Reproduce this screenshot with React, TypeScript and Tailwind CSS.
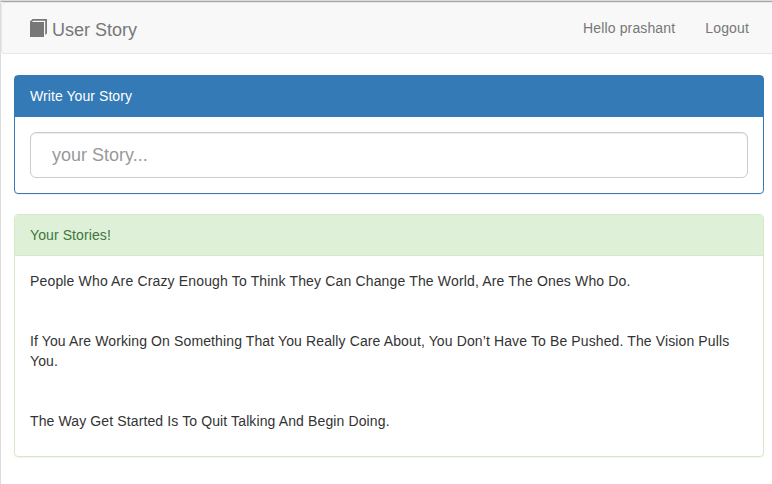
export default function App() {
  return (
    <div className="h-[484px] w-[772px] overflow-hidden border-l border-[#dcdcdc] bg-white font-['Liberation_Sans',Arial,sans-serif] text-[14px] leading-[20px] text-[#333]">
      <div className="h-[2px] border-t border-[#dcdcdc] bg-[#a6a6a6]" />
      <nav className="flex h-[52px] items-center justify-between rounded-l-[4px] border border-r-0 border-[#e7e7e7] bg-[#f8f8f8] pr-[23px] pl-[28px] text-[#777]">
        <a className="flex items-center gap-[4px] text-[18px]">
          <svg width="18" height="18" viewBox="0 0 18 18" fill="#777">
            <path d="M0 2.500L2.500 0H17V14.500L15.200 16V1.800H3.200L1.800 3H14V18H0z" />
          </svg>
          <span className="pt-[3px]">User Story</span>
        </a>
        <div className="flex gap-[30px]">
          <a className="tracking-[0.14px]">Hello prashant</a>
          <a className="tracking-[0.15px]">Logout</a>
        </div>
      </nav>
      <main className="flex flex-col gap-[20px] pt-[21px] pr-[8px] pl-[13px]">
        <section className="rounded-[4px] border border-[#337ab7] shadow-[0_1px_1px_rgba(0,0,0,0.05)]">
          <h2 className="bg-[#337ab7] px-[15px] pt-[10px] pb-[11px] tracking-[0.07px] text-white">Write Your Story</h2>
          <div className="p-[15px]">
            <input
              placeholder="your Story..."
              className="block h-[46px] w-full rounded-[6px] border border-[#ccc] px-[21px] text-[18px] shadow-[inset_0_1px_1px_rgba(0,0,0,0.075)] placeholder:text-[#999]"
            />
          </div>
        </section>
        <section className="rounded-[4px] border border-[#d6e9c6] shadow-[0_1px_1px_rgba(0,0,0,0.05)]">
          <h2 className="rounded-t-[3px] border-b border-[#d6e9c6] bg-[#dff0d8] px-[15px] py-[10px] tracking-[0.1px] text-[#3c763d]">Your Stories!</h2>
          <div className="flex flex-col gap-[40px] px-[15px] pt-[15px] pb-[25px]">
            <p className="tracking-[0.155px]">People Who Are Crazy Enough To Think They Can Change The World, Are The Ones Who Do.</p>
            <p className="tracking-[0.12px]">If You Are Working On Something That You Really Care About, You Don’t Have To Be Pushed. The Vision Pulls You.</p>
            <p className="tracking-[0.12px]">The Way Get Started Is To Quit Talking And Begin Doing.</p>
          </div>
        </section>
      </main>
    </div>
  );
}
